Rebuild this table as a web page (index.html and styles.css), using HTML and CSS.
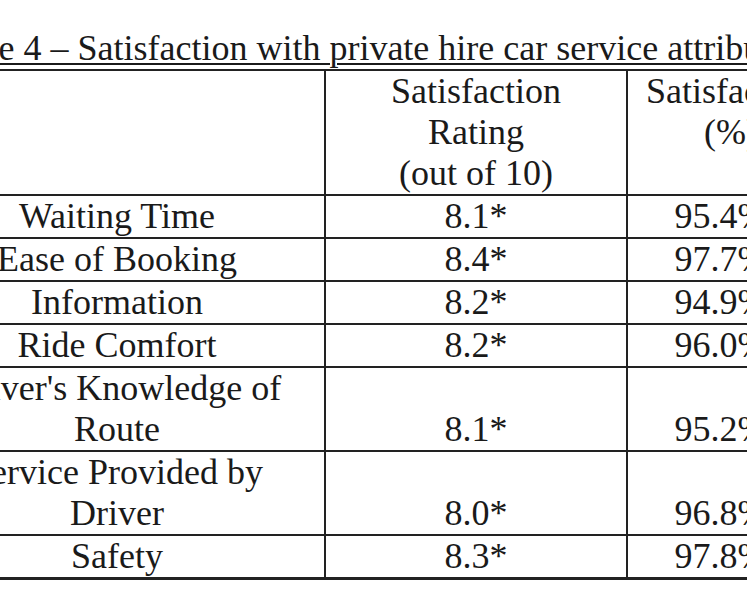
FILE: index.html
```html
<!DOCTYPE html>
<html lang="en">
<head>
<meta charset="utf-8">
<title>Table 4</title>
<link rel="stylesheet" href="styles.css">
</head>
<body>
<div class="sheet">
  <p class="caption">Table 4 – Satisfaction with private hire car service attributes</p>
  <table class="sat">
    <colgroup>
      <col class="c-attr">
      <col class="c-rating">
      <col class="c-pct">
    </colgroup>
    <thead>
      <tr>
        <th></th>
        <th>Satisfaction<br>Rating<br>(out of 10)</th>
        <th>Satisfaction<br>(%)</th>
      </tr>
    </thead>
    <tbody>
      <tr><td>Waiting Time</td><td>8.1*</td><td>95.4%</td></tr>
      <tr><td>Ease of Booking</td><td>8.4*</td><td>97.7%</td></tr>
      <tr><td>Information</td><td>8.2*</td><td>94.9%</td></tr>
      <tr><td>Ride Comfort</td><td>8.2*</td><td>96.0%</td></tr>
      <tr><td>Driver's Knowledge of<br>Route</td><td>8.1*</td><td>95.2%</td></tr>
      <tr><td>Service Provided by<br>Driver</td><td>8.0*</td><td>96.8%</td></tr>
      <tr class="last"><td>Safety</td><td>8.3*</td><td>97.8%</td></tr>
    </tbody>
  </table>
</div>
</body>
</html>
```

FILE: styles.css
```css
html, body {
  margin: 0;
  padding: 0;
  background: #ffffff;
  overflow: hidden;
}

body {
  font-family: "Liberation Serif", "Times New Roman", serif;
  color: #1a1a1a;
  font-size: 36px;
  line-height: 42px;
}

.sheet {
  width: 926px;
  margin-left: -92px;
  padding-top: 27px;
}

.caption {
  margin: 0 0 0 27px;
  white-space: nowrap;
  text-decoration: underline;
  text-decoration-thickness: 2px;
  text-underline-offset: 3px;
}

.sat {
  width: 926px;
  table-layout: fixed;
  border-collapse: collapse;
}

.c-attr { width: 416px; }
.c-rating { width: 302px; }
.c-pct { width: 208px; }

.sat th,
.sat td {
  border: 2px solid #222222;
  padding: 0;
  text-align: center;
  font-weight: normal;
  line-height: 41px;
  white-space: nowrap;
}

.sat th {
  vertical-align: top;
}

.sat td {
  vertical-align: bottom;
}

.sat td:first-child {
  vertical-align: top;
}

.sat td:last-child {
  padding-right: 20px;
}

.sat tr.last td {
  border-bottom-width: 3px;
}
```
